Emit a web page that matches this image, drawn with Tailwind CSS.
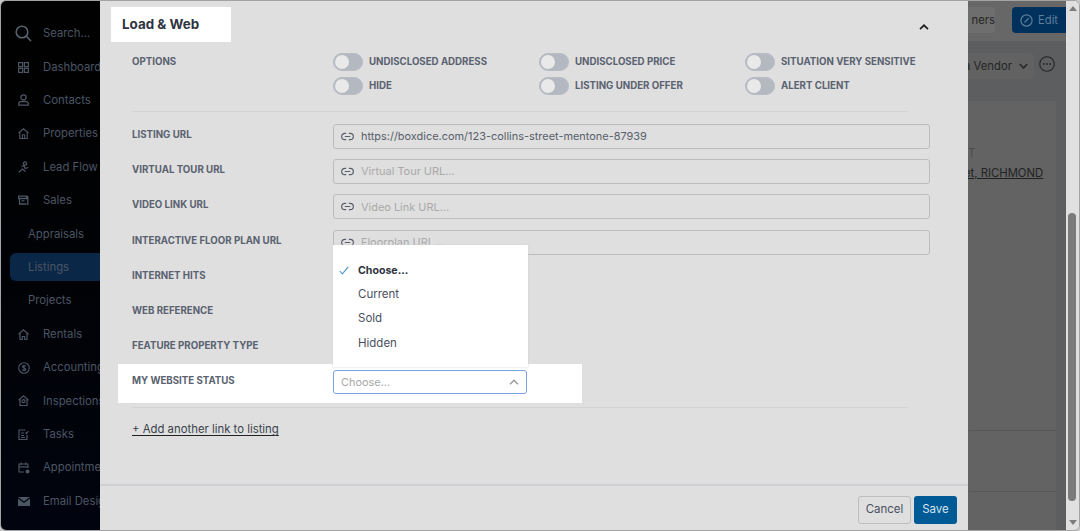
<!DOCTYPE html>
<html lang="en">
<head>
  <meta charset="UTF-8" />
  <title>Load &amp; Web</title>
  <script src="https://cdn.jsdelivr.net/npm/@tailwindcss/browser@4"></script>
</head>
<body class="w-[1080px] h-[531px] overflow-hidden bg-[#c9c9c9] [font-family:Inter,sans-serif]">
  <svg class="hidden">
    <symbol id="link" viewBox="0 0 14 10"><path d="M5.5 1.5H4a3.5 3.5 0 0 0 0 7h1.5M8.5 1.5H10a3.5 3.5 0 0 1 0 7H8.5M4 5h6" fill="none" stroke="currentColor" stroke-width="1.3"/></symbol>
  </svg>

  <div class="relative flex w-[1080px] h-[531px] overflow-hidden border border-[#a3a3a3] rounded-md">

    <!-- sidebar, dimmed by the modal backdrop -->
    <aside class="w-[100px] shrink-0 bg-gradient-to-b from-[#010101] to-[#01040f] pt-[16px] text-[11.300px] text-[#4b5563] overflow-hidden whitespace-nowrap">
      <div class="h-[33.4px] flex items-center pl-[14px] gap-[11px]">
        <svg class="w-[17px] h-[17px] text-[#5a6270]" viewBox="0 0 17 17" fill="none" stroke="currentColor" stroke-width="1.6"><circle cx="7" cy="7" r="5.8"/><path d="M11.3 11.3 16 16"/></svg>
        <span>Search...</span>
      </div>
      <div class="h-[33.4px] flex items-center pl-[17px] gap-[14px]">
        <svg class="w-[11px] h-[11px] shrink-0" viewBox="0 0 11 11" fill="none" stroke="currentColor" stroke-width="1.2"><path d="M.6.6h4v4h-4zM6.4.6h4v4h-4zM.6 6.4h4v4h-4zM6.4 6.4h4v4h-4z"/></svg>
        <span>Dashboard</span>
      </div>
      <div class="h-[33.4px] flex items-center pl-[17px] gap-[14px]">
        <svg class="w-[11px] h-[12px] shrink-0" viewBox="0 0 11 12" fill="none" stroke="currentColor" stroke-width="1.3"><circle cx="5.5" cy="3.4" r="2.6"/><path d="M.8 11.2V9.6c0-1.2 1-2 2-2h5.4c1 0 2 .8 2 2v1.6z"/></svg>
        <span>Contacts</span>
      </div>
      <div class="h-[33.4px] flex items-center pl-[17px] gap-[14px]">
        <svg class="w-[11px] h-[11px] shrink-0" viewBox="0 0 11 11" fill="none" stroke="currentColor" stroke-width="1.1"><path d="M.5 5 5.500 .8 10.500 5M1.800 4.300v6.200h7.400V4.300M4.300 10.500V6.800h2.400v3.700"/></svg>
        <span>Properties</span>
      </div>
      <div class="h-[33.4px] flex items-center pl-[17px] gap-[14px]">
        <svg class="w-[11px] h-[12px] shrink-0" viewBox="0 0 11 12" fill="none" stroke="currentColor" stroke-width="1.3"><circle cx="7" cy="2.500" r="1.600"/><path d="M.8 11.200 4.500 8 7.500 10.500M3.500 5.500 6 4.500l1.200 3 3-1"/></svg>
        <span>Lead Flow</span>
      </div>
      <div class="h-[33.4px] flex items-center pl-[17px] gap-[14px]">
        <svg class="w-[11px] h-[11px] shrink-0" viewBox="0 0 11 11" fill="none" stroke="currentColor" stroke-width="1.3"><path d="M.5 1.200h8v2.300h-8zM1.500 3.500v5.500h7M3.500 5.800h3M9.800 1v9"/></svg>
        <span>Sales</span>
      </div>
      <div class="h-[33.4px] flex items-center pl-[27px]">Appraisals</div>
      <div class="h-[33.4px] flex items-center">
        <div class="ml-[9px] w-full h-[28px] flex items-center pl-[18px] rounded-l-md bg-[#0a2747]">Listings</div>
      </div>
      <div class="h-[33.4px] flex items-center pl-[27px]">Projects</div>
      <div class="h-[33.4px] flex items-center pl-[17px] gap-[14px]">
        <svg class="w-[11px] h-[11px] shrink-0" viewBox="0 0 11 11" fill="none" stroke="currentColor" stroke-width="1.2"><path d="M.5 5.200 5.500 .8l5 4.400M2 4.500v6h2.300V7.500h2.400v3H9v-6"/></svg>
        <span>Rentals</span>
      </div>
      <div class="h-[33.4px] flex items-center pl-[17px] gap-[14px]">
        <svg class="w-[12px] h-[12px] shrink-0 -mr-[1px]" viewBox="0 0 12 12" fill="none" stroke="currentColor" stroke-width="1.100"><circle cx="6" cy="6" r="5.300"/><path d="M7.600 4.200C7.200 3.500 4.500 3.200 4.500 4.700S7.700 5.900 7.700 7.400 4.800 8.600 4.300 7.800M6 2.700v6.600"/></svg>
        <span>Accounting</span>
      </div>
      <div class="h-[33.4px] flex items-center pl-[17px] gap-[14px]">
        <svg class="w-[11px] h-[11px] shrink-0" viewBox="0 0 11 11" fill="none" stroke="currentColor" stroke-width="1.200"><path d="M.5 5.200 5.500 .8l5 4.400M2 4.500v6h7v-6"/><circle cx="5.500" cy="6.200" r="1.500"/></svg>
        <span>Inspections</span>
      </div>
      <div class="h-[33.4px] flex items-center pl-[17px] gap-[14px]">
        <svg class="w-[11px] h-[11px] shrink-0" viewBox="0 0 11 11" fill="none" stroke="currentColor" stroke-width="1.200"><path d="M7.500 1H1v9.500h8V6M3 4h3M3 6.500h3M3 8.500h4M7.500 3.500 8.500 4.500l2-2.500"/></svg>
        <span>Tasks</span>
      </div>
      <div class="h-[33.4px] flex items-center pl-[17px] gap-[14px]">
        <svg class="w-[12px] h-[12px] shrink-0 -mr-[1px]" viewBox="0 0 12 12" fill="none" stroke="currentColor" stroke-width="1.200"><path d="M6 10H1V2h9v4M1 4.800h9M3.300.5v2.500M7.700.5v2.500"/><circle cx="9.500" cy="9.500" r="2" fill="currentColor" stroke="none"/></svg>
        <span>Appointments</span>
      </div>
      <div class="h-[33.4px] flex items-center pl-[17px] gap-[13px]">
        <svg class="w-[12px] h-[9px] shrink-0" viewBox="0 0 12 9" fill="currentColor"><path d="M0 0h12L6 4.500zM0 1.500V9h12V1.500L6 6z"/></svg>
        <span>Email Designer</span>
      </div>
    </aside>

    <!-- page behind the modal -->
    <main class="flex-1 min-w-0 flex flex-col bg-[#5d5e60] text-[11.300px] text-[#252525] whitespace-nowrap">
      <div class="h-[40px] shrink-0 bg-[#676767] flex items-center justify-end pb-[2px] gap-[17px]">
        <div class="h-[26px] w-[44px] flex items-center justify-end rounded-r bg-[#6e6e6e]">ners</div>
        <div class="h-[26px] w-[54px] flex items-center justify-center gap-[5px] bg-[#00305c] rounded-l text-[#5f7f9b]">
          <svg class="w-[13px] h-[13px]" viewBox="0 0 13 13" fill="none" stroke="currentColor" stroke-width="1.200"><circle cx="6.500" cy="6.500" r="5.600"/><path d="M4.500 8.500 8.800 4.200"/></svg>
          Edit
        </div>
      </div>
      <div class="h-[60px] shrink-0 flex items-start justify-end pt-[12px] pr-[11px] gap-[5px]">
        <div class="h-[26px] w-[68px] flex items-center justify-end gap-[7px] pr-[6px] bg-[#626262] rounded-r">
          a Vendor
          <svg class="w-[9px] h-[6px] shrink-0" viewBox="0 0 9 6" fill="none" stroke="currentColor" stroke-width="1.500"><path d="M.8 1 4.500 5 8.200 1"/></svg>
        </div>
        <svg class="w-[16px] h-[16px] mt-[3px] shrink-0" viewBox="0 0 16 16" fill="none" stroke="currentColor" stroke-width="1.100"><circle cx="8" cy="8" r="7.300"/><circle cx="4.800" cy="8" r=".9" fill="currentColor" stroke="none"/><circle cx="8" cy="8" r=".9" fill="currentColor" stroke="none"/><circle cx="11.200" cy="8" r=".9" fill="currentColor" stroke="none"/></svg>
      </div>
      <div class="flex-1 min-h-0 ml-[800px] mr-[10px] bg-[#636363] pl-[67px] pr-[12px] flex flex-col">
        <div class="pt-[44px] h-[64px] text-[#4c4c4c]">T</div>
        <div class="-ml-[4px] underline text-[#222]">et, RICHMOND</div>
        <div class="mt-[248px] h-[61px] border-t border-[#585858] -mr-[12px] w-[87px] ml-auto"></div>
        <div class="border-t border-[#585858] -mr-[12px] w-[87px] ml-auto"></div>
      </div>
    </main>

    <!-- page scrollbar -->
    <div class="w-[13px] shrink-0 bg-[#e0e0e0] flex flex-col items-center justify-between py-[5px] relative">
      <div class="w-0 h-0 border-x-[4px] border-x-transparent border-b-[5px] border-b-[#7c7c7c]"></div>
      <div class="w-0 h-0 border-x-[4px] border-x-transparent border-t-[5px] border-t-[#7c7c7c]"></div>
      <div class="absolute left-[2px] top-[212px] w-[8px] h-[288px] rounded-full bg-[#7b7b7b]"></div>
    </div>

    <!-- modal -->
    <div class="absolute left-[99px] top-0 w-[868px] h-[530px] bg-[#dfdfdf] flex flex-col">
      <div class="flex-1 min-h-0 pl-[32px] pr-[38px]">
        <div class="h-[42px] -mt-[1px] flex items-end">
          <div class="-ml-[21px] w-[120px] h-[35px] pl-[11px] flex items-center bg-white text-[13.400px] font-bold text-[#2e3440]">Load &amp; Web</div>
          <svg class="ml-auto mb-[12px] mr-[1px] w-[10px] h-[6px] text-[#1f1f1f]" viewBox="0 0 10 6" fill="none" stroke="currentColor" stroke-width="1.700"><path d="M1 5.200 5 1.300 9 5.200"/></svg>
        </div>

        <div class="mr-[22px] h-[70px] pt-[8px] border-b border-[#d3d3d3] grid grid-cols-[201px_206px_206px_1fr] grid-rows-[24px_24px] text-[9.700px] font-bold text-[#5a6270] whitespace-nowrap">
          <div class="row-span-2 pt-[5px]">OPTIONS</div>
          <div class="flex items-center gap-[6px]"><span class="relative w-[30px] h-[18px] rounded-full bg-[#b4b8c0] border border-[#b9bcc4]"><span class="absolute left-[1px] top-[1px] w-[14px] h-[14px] rounded-full bg-[#e9e9e9]"></span></span>UNDISCLOSED ADDRESS</div>
          <div class="flex items-center gap-[6px]"><span class="relative w-[30px] h-[18px] rounded-full bg-[#b4b8c0] border border-[#b9bcc4]"><span class="absolute left-[1px] top-[1px] w-[14px] h-[14px] rounded-full bg-[#e9e9e9]"></span></span>UNDISCLOSED PRICE</div>
          <div class="flex items-center gap-[6px]"><span class="relative w-[30px] h-[18px] rounded-full bg-[#b4b8c0] border border-[#b9bcc4]"><span class="absolute left-[1px] top-[1px] w-[14px] h-[14px] rounded-full bg-[#e9e9e9]"></span></span>SITUATION VERY SENSITIVE</div>
          <div class="flex items-center gap-[6px]"><span class="relative w-[30px] h-[18px] rounded-full bg-[#b4b8c0] border border-[#b9bcc4]"><span class="absolute left-[1px] top-[1px] w-[14px] h-[14px] rounded-full bg-[#e9e9e9]"></span></span>HIDE</div>
          <div class="flex items-center gap-[6px]"><span class="relative w-[30px] h-[18px] rounded-full bg-[#b4b8c0] border border-[#b9bcc4]"><span class="absolute left-[1px] top-[1px] w-[14px] h-[14px] rounded-full bg-[#e9e9e9]"></span></span>LISTING UNDER OFFER</div>
          <div class="flex items-center gap-[6px]"><span class="relative w-[30px] h-[18px] rounded-full bg-[#b4b8c0] border border-[#b9bcc4]"><span class="absolute left-[1px] top-[1px] w-[14px] h-[14px] rounded-full bg-[#e9e9e9]"></span></span>ALERT CLIENT</div>
        </div>

        <div class="pt-[5px] text-[9.700px] font-bold text-[#5a6270] [&>div]:h-[35.200px]">
          <div class="grid grid-cols-[201px_1fr] items-start pt-[7px]">
            <span class="pt-[4px]">LISTING URL</span>
            <div class="h-[25px] flex items-center gap-[7px] pl-[7px] border border-[#bcbcbc] rounded-[3px] text-[10.950px] font-normal text-[#585e6a]"><svg class="w-[13px] h-[9px]"><use href="#link"/></svg>https://boxdice.com/123-collins-street-mentone-87939</div>
          </div>
          <div class="grid grid-cols-[201px_1fr] items-start pt-[7px]">
            <span class="pt-[4px]">VIRTUAL TOUR URL</span>
            <div class="h-[25px] flex items-center gap-[7px] pl-[7px] border border-[#bcbcbc] rounded-[3px] text-[10.950px] font-normal text-[#a9a9a9]"><svg class="w-[13px] h-[9px] text-[#585e6a]"><use href="#link"/></svg>Virtual Tour URL...</div>
          </div>
          <div class="grid grid-cols-[201px_1fr] items-start pt-[7px]">
            <span class="pt-[4px]">VIDEO LINK URL</span>
            <div class="h-[25px] flex items-center gap-[7px] pl-[7px] border border-[#bcbcbc] rounded-[3px] text-[10.950px] font-normal text-[#a9a9a9]"><svg class="w-[13px] h-[9px] text-[#585e6a]"><use href="#link"/></svg>Video Link URL...</div>
          </div>
          <div class="grid grid-cols-[201px_1fr] items-start pt-[7px]">
            <span class="pt-[4px]">INTERACTIVE FLOOR PLAN URL</span>
            <div class="h-[25px] flex items-center gap-[7px] pl-[7px] border border-[#bcbcbc] rounded-[3px] text-[10.950px] font-normal text-[#a9a9a9]"><svg class="w-[13px] h-[9px] text-[#585e6a]"><use href="#link"/></svg>Floorplan URL...</div>
          </div>
          <div class="pt-[11px]">INTERNET HITS</div>
          <div class="pt-[11px]">WEB REFERENCE</div>
          <div class="pt-[11px]">FEATURE PROPERTY TYPE</div>
        </div>

        <div class="relative -ml-[14px] w-[464px] h-[39px] bg-white pl-[14px] grid grid-cols-[201px_194px] items-start text-[9.700px] font-bold text-[#5a6270] mt-[1px]">
          <span class="pt-[10px]">MY WEBSITE STATUS</span>
          <div class="mt-[6px] h-[24px] flex items-center justify-between pl-[7px] pr-[7px] border border-[#7ba3e8] rounded-[3px] text-[10.950px] font-normal text-[#a9a9a9]">
            Choose...
            <svg class="w-[10px] h-[6px] text-[#9a9a9a]" viewBox="0 0 10 6" fill="none" stroke="currentColor" stroke-width="1.500"><path d="M1 5.200 5 1.300 9 5.200"/></svg>
          </div>
          <!-- open dropdown -->
          <div class="absolute left-[215px] bottom-[36px] w-[195px] h-[122px] bg-white shadow-[0_0_2px_#cfcfd4] pt-[13px] text-[11.500px] font-normal text-[#4a5060]">
            <div class="h-[24.300px] flex items-center pl-[25px] relative font-bold text-[10.600px] text-[#2e3440]">
              <svg class="absolute left-[6px] top-[8px] w-[10px] h-[9px] text-[#3f8fd0]" viewBox="0 0 10 9" fill="none" stroke="currentColor" stroke-width="1.100"><path d="M.8 5 3.300 8 9.200 .8"/></svg>
              Choose...
            </div>
            <div class="h-[24.300px] flex items-center pl-[25px]">Current</div>
            <div class="h-[24.300px] flex items-center pl-[25px]">Sold</div>
            <div class="h-[24.300px] flex items-center pl-[25px]">Hidden</div>
          </div>
        </div>

        <div class="mr-[22px] mt-[4px] border-t border-[#d3d3d3] pt-[13px] text-[11.350px] text-[#3a3f4a]">
          <a class="underline underline-offset-2 decoration-[#222]">+ Add another link to listing</a>
        </div>
      </div>

      <div class="h-[47px] shrink-0 border-t-2 border-[#cfcfd4] flex items-start justify-end gap-[3px] pt-[10px] pr-[11px] text-[11.500px]">
        <button class="w-[53px] h-[28px] border border-[#bdbdbd] rounded-[3px] text-[#4a5060]">Cancel</button>
        <button class="w-[43px] h-[28px] bg-[#005a96] rounded-[3px] text-[#d6e4ef]">Save</button>
      </div>
    </div>
  </div>
</body>
</html>
